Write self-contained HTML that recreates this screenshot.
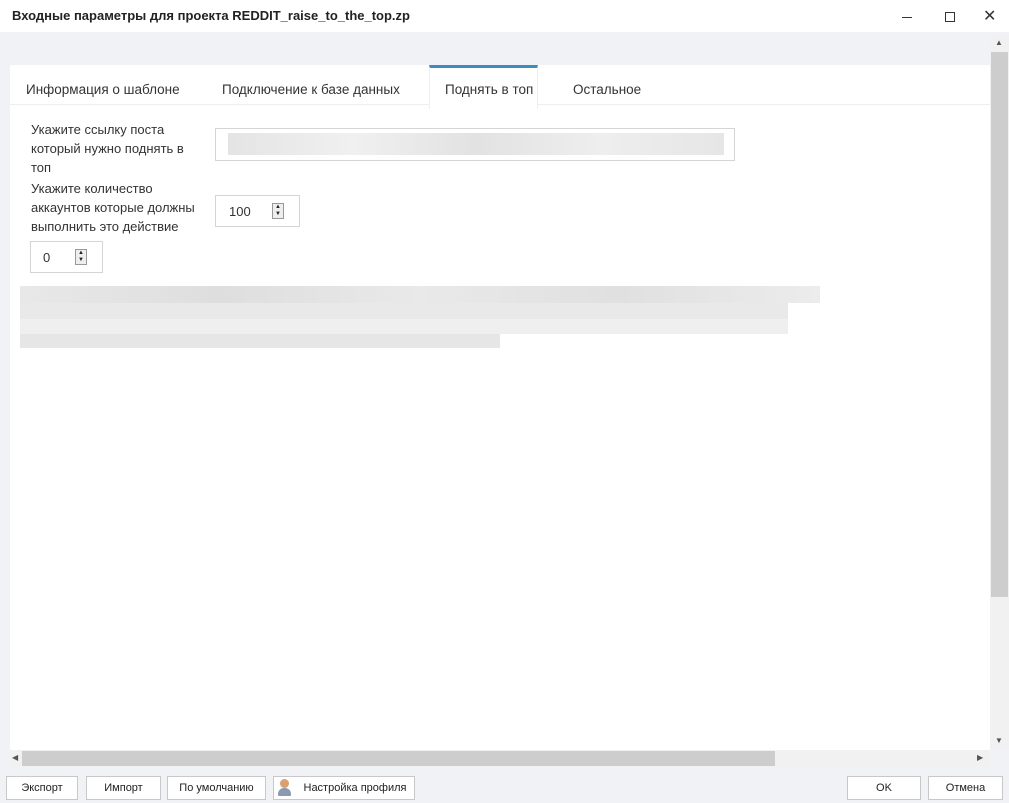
<!DOCTYPE html>
<html><head><meta charset="utf-8"><style>
body{margin:0;width:1009px;height:803px;position:relative;overflow:hidden;background:#f1f2f5;font-family:"Liberation Sans",sans-serif;color:#333}
.a{position:absolute}
.title{left:0;top:0;width:1009px;height:32px;background:#fff;border-top:1px solid #ccc;box-sizing:border-box}
.panel{left:10px;top:65px;width:980px;height:685px;background:#fff}
.tab{top:82px;font-size:13.5px;color:#333}
.lbl{font-size:13px;line-height:19px;color:#333}
.inp{background:#fff;border:1px solid #d5d5d5;box-sizing:border-box}
.spin{width:12px;height:16px;border:1px solid #999;background:#eee;box-sizing:border-box;font-size:6px;line-height:7px;text-align:center;color:#222}
.btn{top:776px;height:24px;background:#fff;border:1px solid #c8c8c8;box-sizing:border-box;font-size:11px;text-align:center;line-height:22px;color:#222}
.blk{background:#e6e6e6}
</style></head><body>
<div class="a title" style="border-top:none"></div>
<div class="a" style="left:12px;top:8px;font-size:13px;font-weight:bold;color:#222">Входные параметры для проекта REDDIT_raise_to_the_top.zp</div>
<div class="a" style="left:902px;top:17px;width:10px;height:1px;background:#333"></div>
<div class="a" style="left:945px;top:12px;width:8px;height:8px;border:1px solid #333"></div>
<div class="a" style="left:983px;top:6px;font-size:16px;color:#333">✕</div>
<div class="a panel"></div>
<div class="a" style="left:10px;top:104px;width:980px;height:1px;background:#eee"></div>
<div class="a" style="left:429px;top:65px;width:109px;height:44px;background:#fff;border-top:3px solid #3f8bbd;box-sizing:border-box;border-left:1px solid #eee;border-right:1px solid #eee"></div>
<div class="a tab" style="left:26px">Информация о шаблоне</div>
<div class="a tab" style="left:222px">Подключение к базе данных</div>
<div class="a tab" style="left:445px">Поднять в топ</div>
<div class="a tab" style="left:573px">Остальное</div>
<div class="a lbl" style="left:31px;top:120px">Укажите ссылку поста<br>который нужно поднять в<br>топ</div>
<div class="a inp" style="left:215px;top:128px;width:520px;height:33px"></div>
<div class="a blk" style="left:228px;top:133px;width:496px;height:22px;background:linear-gradient(90deg,#e4e4e4,#f0f0f0,#e2e2e2,#eee,#e6e6e6)"></div>
<div class="a lbl" style="left:31px;top:179px">Укажите количество<br>аккаунтов которые должны<br>выполнить это действие</div>
<div class="a inp" style="left:215px;top:195px;width:85px;height:32px"></div>
<div class="a" style="left:229px;top:204px;font-size:13px">100</div>
<div class="a spin" style="left:272px;top:203px">▲<br>▼</div>
<div class="a inp" style="left:30px;top:241px;width:73px;height:32px"></div>
<div class="a" style="left:43px;top:250px;font-size:13px">0</div>
<div class="a spin" style="left:75px;top:249px">▲<br>▼</div>
<div class="a blk" style="left:20px;top:286px;width:800px;height:17px;background:linear-gradient(90deg,#e8e8e8,#dedede,#e9e9e9,#e0e0e0,#ececec)"></div>
<div class="a blk" style="left:20px;top:303px;width:768px;height:16px;background:#e9e9e9"></div>
<div class="a blk" style="left:20px;top:319px;width:768px;height:15px;background:#efefef"></div>
<div class="a blk" style="left:20px;top:334px;width:480px;height:14px;background:#e6e6e6"></div>
<div class="a" style="left:990px;top:35px;width:19px;height:713px;background:#f1f1f1"></div>
<div class="a" style="left:991px;top:52px;width:17px;height:545px;background:#cdcdcd"></div>
<div class="a" style="left:995px;top:38px;font-size:8px;color:#555">▲</div>
<div class="a" style="left:995px;top:736px;font-size:8px;color:#555">▼</div>
<div class="a" style="left:10px;top:750px;width:980px;height:17px;background:#f1f1f1"></div>
<div class="a" style="left:22px;top:751px;width:753px;height:15px;background:#cdcdcd"></div>
<div class="a" style="left:12px;top:753px;font-size:8px;color:#555">◀</div>
<div class="a" style="left:977px;top:753px;font-size:8px;color:#555">▶</div>
<div class="a btn" style="left:6px;width:72px">Экспорт</div>
<div class="a btn" style="left:86px;width:75px">Импорт</div>
<div class="a btn" style="left:167px;width:99px">По умолчанию</div>
<div class="a btn" style="left:273px;width:142px;padding-left:22px">Настройка профиля</div>
<div class="a" style="left:280px;top:779px;width:9px;height:9px;border-radius:50%;background:#d9a070"></div>
<div class="a" style="left:278px;top:788px;width:13px;height:8px;border-radius:6px 6px 1px 1px;background:#8a9ab0"></div>
<div class="a btn" style="left:847px;width:74px">OK</div>
<div class="a btn" style="left:928px;width:75px">Отмена</div>
</body></html>
